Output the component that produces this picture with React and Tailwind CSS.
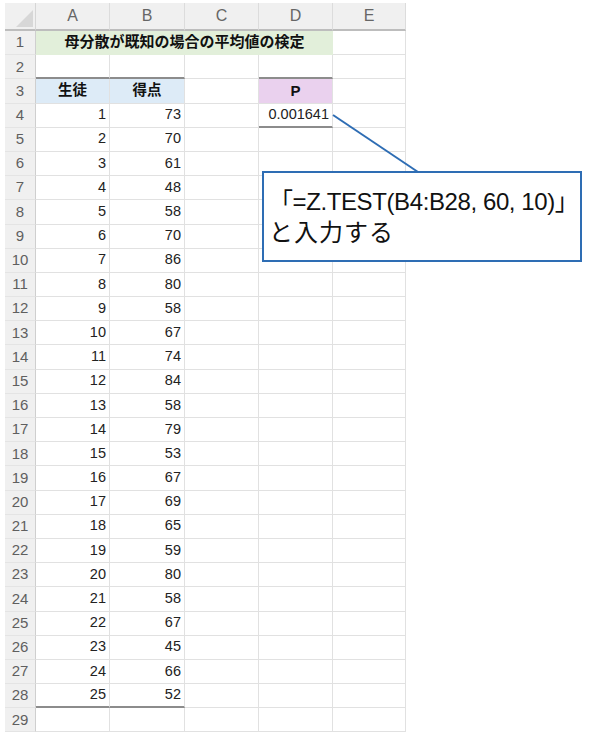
import React from "react";

const scores = [73, 70, 61, 48, 58, 70, 86, 80, 58, 67, 74, 84, 58, 79, 53, 67, 69, 65, 59, 80, 58, 67, 45, 66, 52];
const cols = ["A", "B", "C", "D", "E"];
const widths = ["w-[74px]", "w-[75px]", "w-[74px]", "w-[74px]", "w-[73px]"];

const LIGHT = "border-b border-b-[#e1e1e1]";
const THICK = "border-b-2 border-b-[#8c8c8c]";

function Cell({ w, bottom = LIGHT, className = "", children }) {
  return (
    <div className={`${w} h-full shrink-0 border-r border-r-[#e1e1e1] ${bottom} ${className}`}>
      {children}
    </div>
  );
}

function RowHead({ n }) {
  return (
    <div className="w-[31px] h-full shrink-0 bg-[#f0f0f0] border-r border-r-[#cfcfcf] border-b border-b-[#e4e4e4] flex items-center justify-center text-[15px] text-[#5f5f5f]">
      {n}
    </div>
  );
}

function Num({ children }) {
  return <div className="h-full flex items-center justify-end pr-[3px] text-[14.5px] text-[#222]">{children}</div>;
}

export default function App() {
  const rows = [];

  // row 1: merged title
  rows.push(
    <div key={1} className="flex h-[24.2px]">
      <RowHead n={1} />
      <div className="w-[297px] h-full shrink-0 bg-[#e2efda] border-b border-b-[#e2efda] flex items-center justify-center font-bold text-[15px] text-[#111]">
        母分散が既知の場合の平均値の検定
      </div>
      <Cell w={widths[4]} />
    </div>
  );

  // row 2
  rows.push(
    <div key={2} className="flex h-[24.2px]">
      <RowHead n={2} />
      <Cell w={widths[0]} bottom={THICK} />
      <Cell w={widths[1]} bottom={THICK} />
      <Cell w={widths[2]} />
      <Cell w={widths[3]} bottom={THICK} />
      <Cell w={widths[4]} />
    </div>
  );

  // row 3: headers
  rows.push(
    <div key={3} className="flex h-[24.2px]">
      <RowHead n={3} />
      <Cell w={widths[0]} className="bg-[#ddebf7] flex items-center justify-center font-bold text-[14.5px] text-[#111]">生徒</Cell>
      <Cell w={widths[1]} className="bg-[#ddebf7] flex items-center justify-center font-bold text-[14.5px] text-[#111]">得点</Cell>
      <Cell w={widths[2]} />
      <Cell w={widths[3]} className="bg-[#ead1ee] flex items-center justify-center font-bold text-[15px] text-[#111]">P</Cell>
      <Cell w={widths[4]} />
    </div>
  );

  scores.forEach((s, i) => {
    const r = i + 4;
    const last = i === scores.length - 1;
    rows.push(
      <div key={r} className="flex h-[24.2px]">
        <RowHead n={r} />
        <Cell w={widths[0]} bottom={last ? THICK : LIGHT}><Num>{i + 1}</Num></Cell>
        <Cell w={widths[1]} bottom={last ? THICK : LIGHT}><Num>{s}</Num></Cell>
        <Cell w={widths[2]} />
        <Cell w={widths[3]} bottom={r === 4 ? THICK : LIGHT}>
          {r === 4 && <Num>0.001641</Num>}
        </Cell>
        <Cell w={widths[4]} />
      </div>
    );
  });

  rows.push(
    <div key={29} className="flex h-[24.2px]">
      <RowHead n={29} />
      {widths.map((w, k) => (
        <Cell key={k} w={w} />
      ))}
    </div>
  );

  return (
    <div className="relative w-[590px] h-[739px] bg-white overflow-hidden font-['Liberation_Sans','Noto_Sans_CJK_JP',sans-serif]">
      <div className="pl-[5px] pt-[3px]">
        {/* column headers */}
        <div className="flex h-[28px]">
          <div className="relative w-[31px] h-full shrink-0 bg-[#f0f0f0] border-r border-r-[#d6d6d6] border-b-2 border-b-[#bdbdbd]">
            <svg className="absolute left-0 top-0" width="31" height="26" viewBox="0 0 31 26">
              <polygon points="28,7 28,24 11,24" fill="#d7d7d7" />
            </svg>
          </div>
          {cols.map((c, k) => (
            <div
              key={c}
              className={`${widths[k]} h-full shrink-0 bg-[#f0f0f0] border-r border-r-[#dcdcdc] border-b-2 border-b-[#bdbdbd] flex items-center justify-center text-[16px] text-[#666]`}
            >
              {c}
            </div>
          ))}
        </div>
        {rows}
      </div>

      {/* callout connector */}
      <svg className="absolute left-0 top-0 pointer-events-none" width="590" height="739">
        <line x1="333" y1="115" x2="418" y2="172" stroke="#2e6db4" strokeWidth="2" />
      </svg>

      {/* callout box */}
      <div className="absolute left-[262px] top-[171px] w-[320px] h-[91px] bg-white border-2 border-[#2e6db4] flex flex-col justify-center pl-[5px] text-[24px] leading-[31px] text-[#111]">
        <div className="tracking-[-0.4px]">「=Z.TEST(B4:B28, 60, 10)」</div>
        <div className="tracking-[1px]">と入力する</div>
      </div>
    </div>
  );
}
